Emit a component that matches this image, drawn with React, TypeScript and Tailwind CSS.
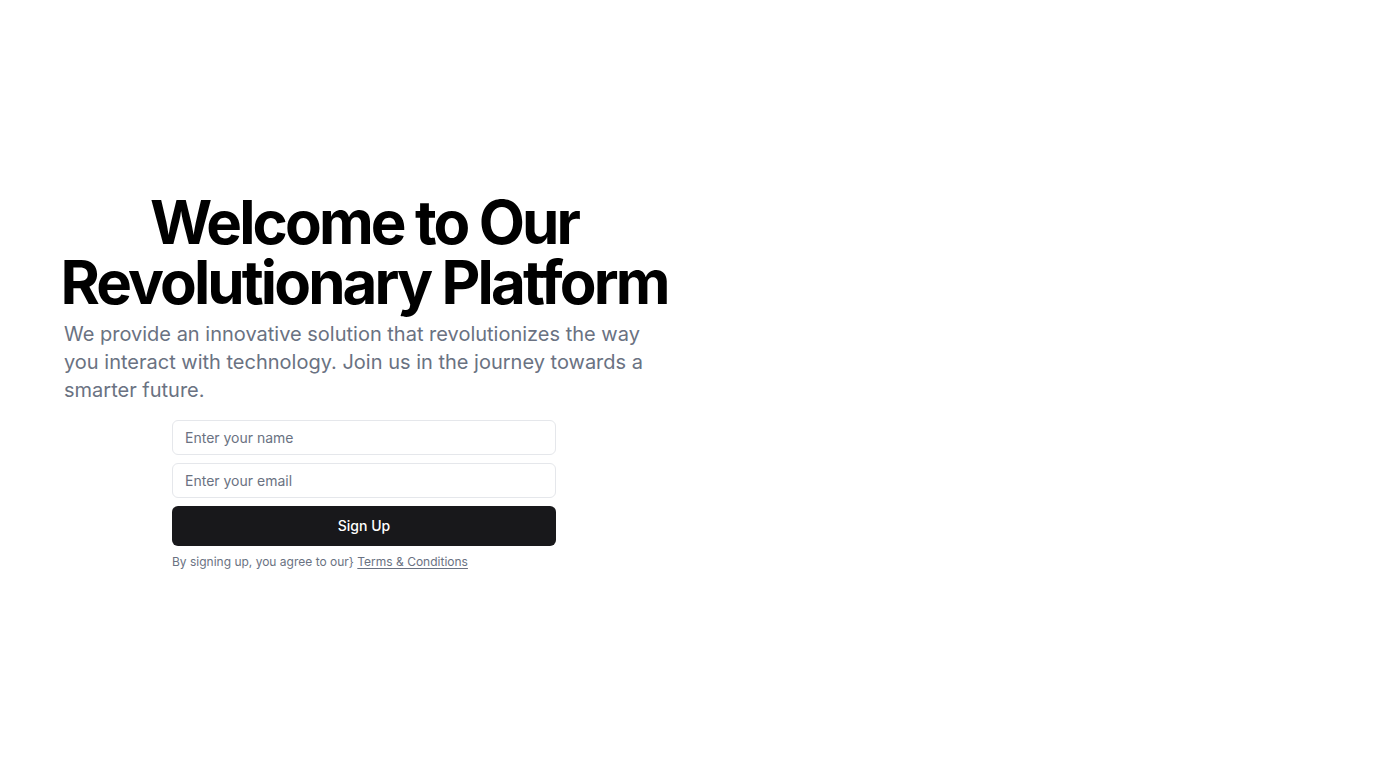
export default function App() {
  return (
    <main
      className="flex h-screen w-full items-center bg-white"
      style={{ fontFamily: "Inter, 'Noto Sans', sans-serif" }}
    >
      <div className="grid w-full grid-cols-[664px_1fr] px-8">
        <div className="flex flex-col items-center space-y-4">
          <div className="flex flex-col items-center space-y-2">
            <h1 className="text-center text-6xl leading-none font-bold tracking-[-0.048em] text-black">
              Welcome to Our
              <br />
              Revolutionary Platform
            </h1>
            <p className="w-full max-w-[600px] text-xl text-gray-500">
              We provide an innovative solution that revolutionizes the way you interact with technology.
              Join us in the journey towards a smarter future.
            </p>
          </div>
          <div className="w-full max-w-sm space-y-2">
            <form className="flex flex-col gap-2">
              <input
                type="text"
                placeholder="Enter your name"
                className="h-[35px] w-full rounded-md border border-gray-200 bg-white px-3 text-sm text-gray-900 placeholder:text-gray-500 focus:outline-none"
              />
              <input
                type="email"
                placeholder="Enter your email"
                className="h-[35px] w-full rounded-md border border-gray-200 bg-white px-3 text-sm text-gray-900 placeholder:text-gray-500 focus:outline-none"
              />
              <button
                type="submit"
                className="h-10 w-full rounded-md bg-[#18181b] text-sm font-medium text-white"
              >
                Sign Up
              </button>
            </form>
            <p className="text-xs text-gray-500">
              By signing up, you agree to our{"}"}{" "}
              <a href="#" className="underline underline-offset-2">
                Terms &amp; Conditions
              </a>
            </p>
          </div>
        </div>
        <div />
      </div>
    </main>
  );
}
